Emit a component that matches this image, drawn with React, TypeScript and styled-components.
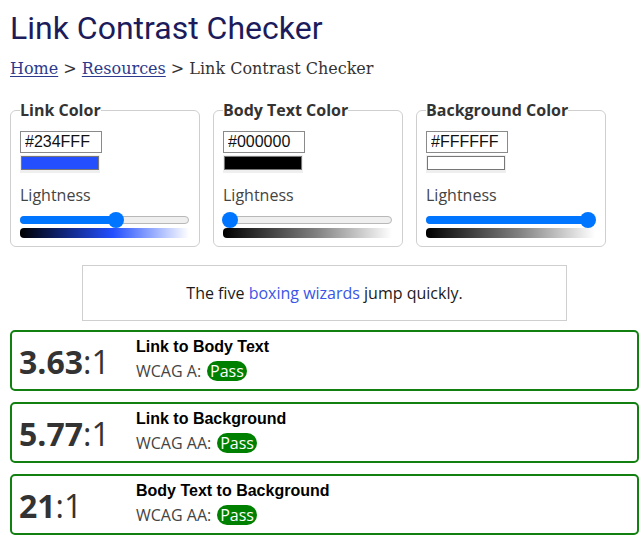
import React from "react";
import styled, { createGlobalStyle } from "styled-components";

const Global = createGlobalStyle`
  html, body { margin: 0; padding: 0; background: #fff; }
  body { font-family: "Open Sans", sans-serif; color: #333; }
`;

const Page = styled.div`
  width: 629px;
  margin-left: 10px;
`;

const Title = styled.h1`
  font-family: Roboto, sans-serif;
  font-weight: 400;
  font-size: 32px;
  line-height: 38px;
  color: #1c1c5c;
  margin: 9px 0 0 0;
`;

const Crumbs = styled.nav`
  font-family: "DejaVu Serif", serif;
  font-size: 16px;
  line-height: 20px;
  color: #333;
  margin-top: 12px;
  a { color: #2b3a8c; text-decoration: underline; text-underline-offset: 2px; }
`;

const Pickers = styled.div`
  display: flex;
  gap: 13px;
  margin-top: 20px;
`;

const Field = styled.fieldset`
  box-sizing: border-box;
  width: 190px;
  margin: 0;
  padding: 10px 10px 8px 9px;
  border: 1px solid #cfcfcf;
  border-radius: 6px;
  display: flex;
  flex-direction: column;
  align-items: flex-start;
`;

const Legend = styled.legend`
  font-family: "Open Sans", sans-serif;
  font-weight: 700;
  font-size: 16px;
  line-height: 22px;
  color: #333;
  padding: 0;
`;

const HexInput = styled.input`
  box-sizing: border-box;
  width: 82px;
  height: 22px;
  font-family: "Liberation Sans", Arial, sans-serif;
  font-size: 16px;
  color: #111;
  padding: 1px 4px;
  margin: 0;
  border: 1px solid #8a8a8a;
  border-radius: 0;
  outline: none;
`;

const Swatch = styled.div`
  box-sizing: border-box;
  width: 80px;
  height: 18px;
  margin-top: 2px;
  background: #efefef;
  padding: 1px 1px 3px 1px;
`;

const SwatchFill = styled.div<{ $c: string }>`
  box-sizing: border-box;
  width: 100%;
  height: 100%;
  background: ${(p) => p.$c};
  border: 1px solid #777;
`;

const Label = styled.div`
  font-family: "Open Sans", sans-serif;
  font-size: 16px;
  line-height: 22px;
  color: #444;
  margin-top: 11px;
`;

const Slider = styled.div`
  position: relative;
  width: 169px;
  height: 16px;
  margin-top: 6px;
`;

const Track = styled.div`
  position: absolute;
  left: 0;
  right: 0;
  top: 4px;
  height: 8px;
  border-radius: 4px;
  background: #efefef;
  border: 1px solid #b8b8b8;
  box-sizing: border-box;
`;

const Fill = styled.div`
  position: absolute;
  left: 0;
  top: 4px;
  height: 8px;
  border-radius: 4px;
  background: #0075ff;
`;

const Thumb = styled.div`
  position: absolute;
  top: 0;
  width: 16px;
  height: 16px;
  margin-left: -8px;
  border-radius: 50%;
  background: #0075ff;
`;

const Gradient = styled.div<{ $mid: string }>`
  width: 169px;
  height: 10px;
  margin-top: 0;
  border-radius: 4px 0 0 4px;
  background: linear-gradient(to right, #000 0%, ${(p) => p.$mid} 55%, #fff 100%);
`;

const Sample = styled.div`
  box-sizing: border-box;
  width: 485px;
  height: 56px;
  margin: 18px auto 0;
  border: 1px solid #cfcfcf;
  display: flex;
  align-items: center;
  justify-content: center;
  font-family: "Open Sans", sans-serif;
  font-size: 16px;
  color: #1a1a1a;
  span { color: #3a56e8; }
`;

const Results = styled.div`
  display: flex;
  flex-direction: column;
  gap: 11px;
  margin-top: 9px;
`;

const Result = styled.div`
  box-sizing: border-box;
  height: 61px;
  border: 2px solid #118011;
  border-radius: 5px;
  display: grid;
  grid-template-columns: 117px 1fr;
  align-items: center;
  padding-left: 7px;
`;

const Ratio = styled.div`
  font-family: "Open Sans", sans-serif;
  font-size: 32px;
  color: #333;
  line-height: 40px;
  padding-top: 2px;
  b { font-weight: 700; }
`;

const Info = styled.div`
  align-self: start;
  padding-top: 5px;
`;

const RTitle = styled.div`
  font-family: "Liberation Sans", Arial, sans-serif;
  font-weight: 700;
  font-size: 16px;
  line-height: 20px;
  color: #000;
`;

const Level = styled.div`
  font-family: "Open Sans", sans-serif;
  font-size: 16px;
  line-height: 22px;
  color: #444;
  margin-top: 3px;
  display: flex;
  align-items: center;
  gap: 6px;
`;

const Badge = styled.span`
  background: #008000;
  color: #fff;
  border-radius: 10px;
  padding: 0 3px;
  line-height: 20px;
`;

const pickers = [
  { name: "Link Color", hex: "#234FFF", color: "#234fff", pos: 57 },
  { name: "Body Text Color", hex: "#000000", color: "#000000", pos: 4 },
  { name: "Background Color", hex: "#FFFFFF", color: "#ffffff", pos: 96 },
];

const results = [
  { ratio: "3.63", title: "Link to Body Text", level: "WCAG A:" },
  { ratio: "5.77", title: "Link to Background", level: "WCAG AA:" },
  { ratio: "21", title: "Body Text to Background", level: "WCAG AA:" },
];

export default function App() {
  return (
    <Page>
      <Global />
      <Title>Link Contrast Checker</Title>
      <Crumbs>
        <a href="#">Home</a> &gt; <a href="#">Resources</a> &gt; Link Contrast Checker
      </Crumbs>
      <Pickers>
        {pickers.map((p) => (
          <Field key={p.name}>
            <Legend>{p.name}</Legend>
            <HexInput defaultValue={p.hex} />
            <Swatch>
              <SwatchFill $c={p.color} />
            </Swatch>
            <Label>Lightness</Label>
            <Slider>
              <Track />
              <Fill style={{ width: `${p.pos}%` }} />
              <Thumb style={{ left: `${p.pos}%` }} />
            </Slider>
            <Gradient $mid={p.color === "#234fff" ? "#234fff" : "#808080"} />
          </Field>
        ))}
      </Pickers>
      <Sample>
        The five&nbsp;<span>boxing wizards</span>&nbsp;jump quickly.
      </Sample>
      <Results>
        {results.map((r) => (
          <Result key={r.title}>
            <Ratio>
              <b>{r.ratio}</b>:1
            </Ratio>
            <Info>
              <RTitle>{r.title}</RTitle>
              <Level>
                {r.level} <Badge>Pass</Badge>
              </Level>
            </Info>
          </Result>
        ))}
      </Results>
    </Page>
  );
}
